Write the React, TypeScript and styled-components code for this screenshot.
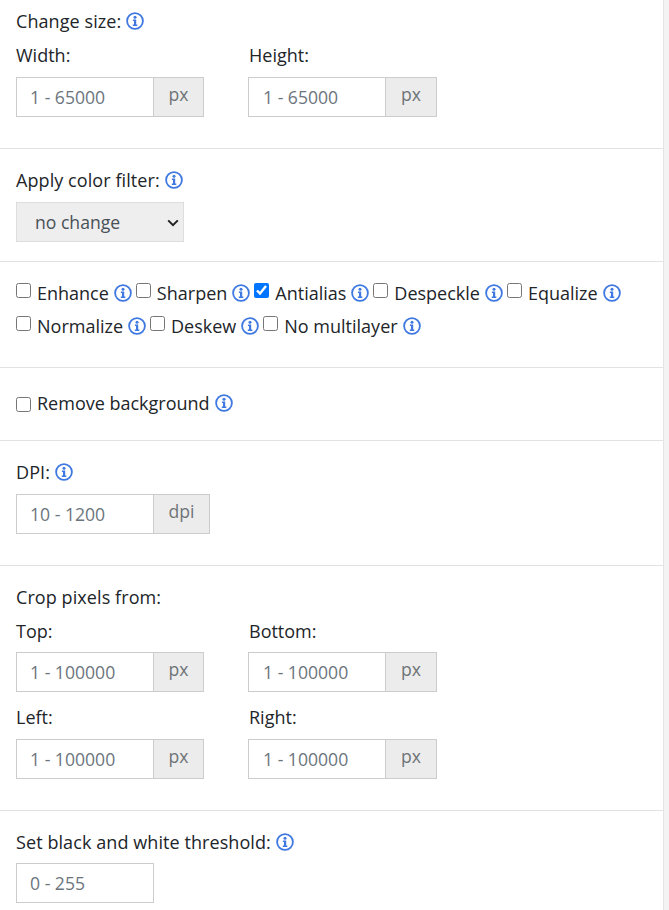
import * as React from 'react';
import styled, { createGlobalStyle } from 'styled-components';

const GlobalStyle = createGlobalStyle`
  html, body {
    margin: 0;
    padding: 0;
    background: #f3f3f3;
  }
  body {
    font-family: "Open Sans", "Liberation Sans", sans-serif;
    font-size: 18px;
    color: #212529;
  }
`;

const Panel = styled.div`
  width: 663px;
  height: 910px;
  overflow: hidden;
  background: #fff;
  border-right: 1px solid #e4e4e4;
`;

const Section = styled.div<{ $height: number; $top?: number }>`
  box-sizing: border-box;
  height: ${(p) => p.$height}px;
  padding: ${(p) => p.$top ?? 19}px 16px 0;
  border-bottom: 1px solid #e2e2e2;
  &:last-child {
    border-bottom: none;
  }
`;

const Heading = styled.div`
  display: flex;
  align-items: center;
  gap: 5px;
  height: 24px;
  line-height: 24px;
  letter-spacing: 0.08px;
`;

const Fields = styled.div<{ $top?: number }>`
  display: flex;
  gap: 44px;
  margin-top: ${(p) => p.$top ?? 10}px;
`;

const FieldLabel = styled.label<{ $gap?: number }>`
  height: 24px;
  line-height: 24px;
  margin-bottom: ${(p) => p.$gap ?? 10}px;
`;

const InputGroup = styled.div<{ $top?: number }>`
  display: flex;
  height: 40px;
  margin-top: ${(p) => p.$top ?? 0}px;
`;

const TextInput = styled.input`
  box-sizing: border-box;
  width: 138px;
  height: 40px;
  padding: 0 13px;
  border: 1px solid #ccc;
  background: #fff;
  font-family: inherit;
  font-size: 17.6px;
  color: #292b2c;
  outline: none;
  &::placeholder {
    color: #6c757d;
    opacity: 1;
  }
`;

const Addon = styled.span<{ $width?: number }>`
  box-sizing: border-box;
  display: flex;
  justify-content: center;
  padding: 4px 14px 0;
  min-width: ${(p) => p.$width ?? 51}px;
  height: 40px;
  margin-left: -1px;
  border: 1px solid #ccc;
  background: #ececec;
  font-size: 17.6px;
  color: #6f7477;
`;

const Field = styled.div`
  display: flex;
  flex-direction: column;
  & + & ${FieldLabel} {
    padding-left: 1px;
  }
  & + & ${TextInput} {
    padding-left: 14px;
  }
  & + & ${Addon} {
    min-width: 52px;
  }
`;

const SelectWrap = styled.div`
  position: relative;
  width: 168px;
  height: 40px;
  margin-top: 10px;
`;

const Select = styled.select`
  box-sizing: border-box;
  display: block;
  width: 100%;
  height: 100%;
  padding: 0 18px;
  border: 1px solid #ddd;
  border-radius: 0;
  background: #eee;
  appearance: none;
  font-family: inherit;
  font-size: 17.6px;
  color: #495057;
`;

const Chevron = styled.svg`
  position: absolute;
  top: 17px;
  right: 5px;
  width: 12px;
  height: 8px;
  color: #222;
  pointer-events: none;
`;

const OptionRows = styled.div`
  display: flex;
  flex-wrap: wrap;
  row-gap: 9px;
  column-gap: 4px;
`;

const Option = styled.label`
  display: inline-flex;
  align-items: center;
  height: 24px;
`;

const Check = styled.input<{ $lift?: number }>`
  width: 15px;
  height: 15px;
  margin: 0 6px ${(p) => p.$lift ?? 5}px 0;
`;

const OptionName = styled.span`
  margin-right: 5px;
`;

const InfoSvg = styled.svg`
  flex: none;
  width: 18px;
  height: 18px;
  color: #3f78e0;
`;

const Info = () => (
  <InfoSvg viewBox="0 0 18 18" fill="none" aria-hidden="true">
    <circle cx="9" cy="9" r="7.9" stroke="currentColor" strokeWidth="1.8" />
    <circle cx="9" cy="5.2" r="1.5" fill="currentColor" />
    <path d="M6.9 7.6h3.3v4.9h1.1v1.5H6.8v-1.5h1.2V9.1H6.9z" fill="currentColor" />
  </InfoSvg>
);

type FieldProps = { label: string; placeholder: string; unit: string; gap?: number };

const NumberField = ({ label, placeholder, unit, gap }: FieldProps) => (
  <Field>
    <FieldLabel $gap={gap}>{label}</FieldLabel>
    <InputGroup>
      <TextInput placeholder={placeholder} />
      <Addon>{unit}</Addon>
    </InputGroup>
  </Field>
);

const options = [
  'Enhance',
  'Sharpen',
  'Antialias',
  'Despeckle',
  'Equalize',
  'Normalize',
  'Deskew',
  'No multilayer',
];

export default function App() {
  return (
    <Panel>
      <GlobalStyle />
      <Section $height={149} $top={9}>
        <Heading>
          Change size: <Info />
        </Heading>
        <Fields>
          <NumberField label="Width:" placeholder="1 - 65000" unit="px" />
          <NumberField label="Height:" placeholder="1 - 65000" unit="px" />
        </Fields>
      </Section>
      <Section $height={113}>
        <Heading>
          Apply color filter: <Info />
        </Heading>
        <SelectWrap>
          <Select defaultValue="no change">
            <option>no change</option>
          </Select>
          <Chevron viewBox="0 0 12 8" fill="none" aria-hidden="true">
            <path d="M1.2 1.4 6 6.2l4.8-4.8" stroke="currentColor" strokeWidth="2" />
          </Chevron>
        </SelectWrap>
      </Section>
      <Section $height={106}>
        <OptionRows>
          {options.map((name) => (
            <Option key={name}>
              <Check type="checkbox" defaultChecked={name === 'Antialias'} />
              <OptionName>{name}</OptionName>
              <Info />
            </Option>
          ))}
        </OptionRows>
      </Section>
      <Section $height={73} $top={23}>
        <Option>
          <Check type="checkbox" $lift={-2} />
          <OptionName>Remove background</OptionName>
          <Info />
        </Option>
      </Section>
      <Section $height={125}>
        <Heading>
          DPI: <Info />
        </Heading>
        <InputGroup $top={10}>
          <TextInput placeholder="10 - 1200" />
          <Addon $width={57}>dpi</Addon>
        </InputGroup>
      </Section>
      <Section $height={245}>
        <Heading>Crop pixels from:</Heading>
        <Fields>
          <NumberField label="Top:" placeholder="1 - 100000" unit="px" gap={9} />
          <NumberField label="Bottom:" placeholder="1 - 100000" unit="px" gap={9} />
        </Fields>
        <Fields $top={13}>
          <NumberField label="Left:" placeholder="1 - 100000" unit="px" />
          <NumberField label="Right:" placeholder="1 - 100000" unit="px" />
        </Fields>
      </Section>
      <Section $height={99}>
        <Heading>
          Set black and white threshold: <Info />
        </Heading>
        <InputGroup $top={9}>
          <TextInput placeholder="0 - 255" />
        </InputGroup>
      </Section>
    </Panel>
  );
}
